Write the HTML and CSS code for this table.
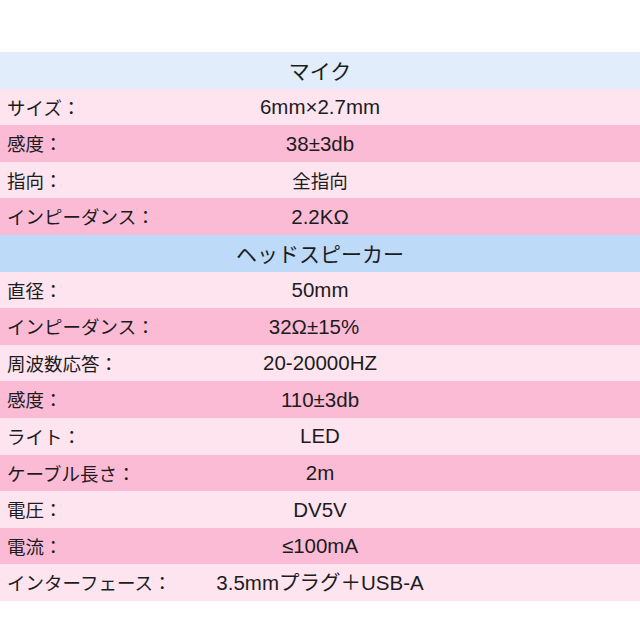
FILE: index.html
```html
<!DOCTYPE html>
<html lang="ja">
<head>
<meta charset="utf-8">
<link rel="stylesheet" href="styles.css">
</head>
<body>
<div class="spec">
  <div class="row head head-light"><span class="val">マイク</span></div>
  <div class="row light"><span class="lab">サイズ：</span><span class="val">6mm×2.7mm</span></div>
  <div class="row dark"><span class="lab">感度：</span><span class="val">38±3db</span></div>
  <div class="row light"><span class="lab">指向：</span><span class="val jp">全指向</span></div>
  <div class="row dark"><span class="lab">インピーダンス：</span><span class="val">2.2KΩ</span></div>
  <div class="row head head-dark"><span class="val">ヘッドスピーカー</span></div>
  <div class="row light"><span class="lab">直径：</span><span class="val">50mm</span></div>
  <div class="row dark"><span class="lab">インピーダンス：</span><span class="val shift">32Ω±15%</span></div>
  <div class="row light"><span class="lab">周波数応答：</span><span class="val">20-20000HZ</span></div>
  <div class="row dark"><span class="lab">感度：</span><span class="val">110±3db</span></div>
  <div class="row light"><span class="lab">ライト：</span><span class="val">LED</span></div>
  <div class="row dark"><span class="lab">ケーブル長さ：</span><span class="val">2m</span></div>
  <div class="row light"><span class="lab">電圧：</span><span class="val">DV5V</span></div>
  <div class="row dark"><span class="lab">電流：</span><span class="val">≤100mA</span></div>
  <div class="row light"><span class="lab">インターフェース：</span><span class="val">3.5mmプラグ＋USB-A</span></div>
</div>
</body>
</html>
```
FILE: styles.css
```css
html, body {
  margin: 0;
  padding: 0;
  background: #ffffff;
}
body {
  font-family: "Liberation Sans", "Noto Sans CJK JP", sans-serif;
  color: #1c1c1e;
}
.spec {
  margin-top: 52px;
  display: grid;
  grid-auto-rows: 36.6px;
}
.row {
  display: grid;
  grid-template-columns: 1fr auto 1fr;
  align-items: center;
  line-height: 1;
}
.lab {
  grid-column: 1;
  padding-left: 7px;
  white-space: nowrap;
  font-family: "Noto Sans CJK JP", sans-serif;
  font-size: 18.5px;
}
.val {
  grid-column: 2;
  white-space: nowrap;
  font-size: 20.5px;
  padding-top: 1px;
}
.val.jp {
  font-family: "Noto Sans CJK JP", sans-serif;
  font-size: 18.5px;
}
.shift {
  position: relative;
  left: -6px;
}
.head .val {
  font-family: "Noto Sans CJK JP", sans-serif;
  font-size: 21px;
}
.head-light { background: #e1edfb; }
.head-dark { background: #bddaf8; }
.light { background: #fde4ef; }
.dark { background: #fcbbd5; }
```
